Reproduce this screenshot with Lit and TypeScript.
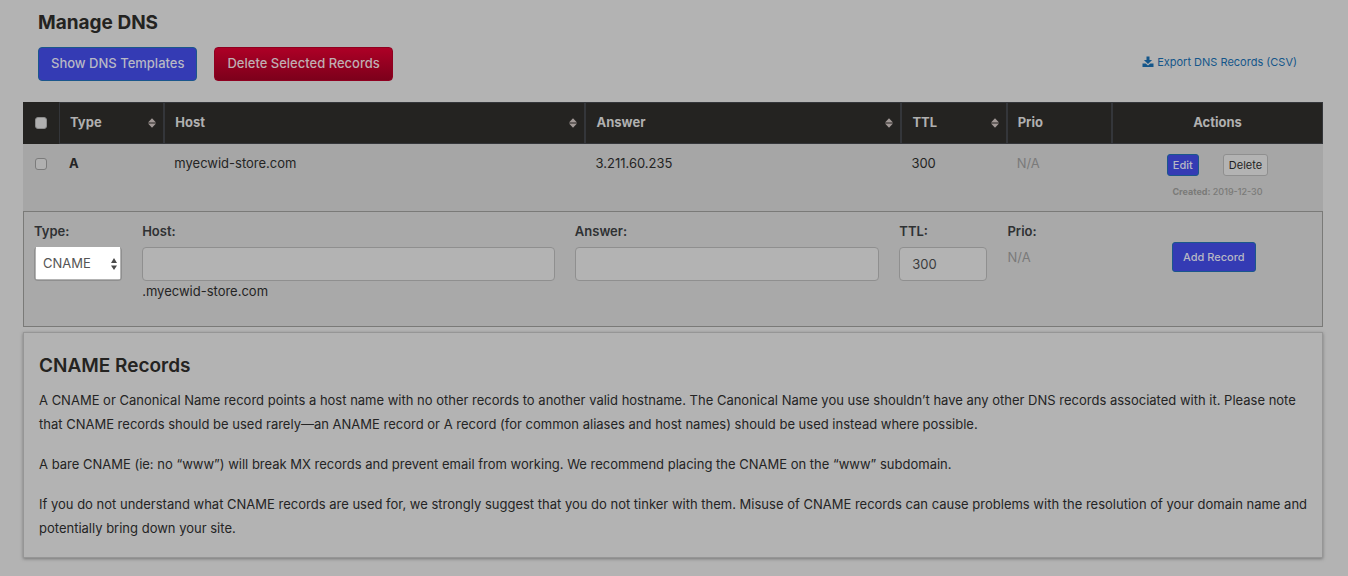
import { LitElement, html, css, svg } from "lit";
import { customElement, state } from "lit/decorators.js";

interface DnsRecord {
  type: string;
  host: string;
  answer: string;
  ttl: number;
  prio: string;
  created: string;
}

const sortIcon = html`<svg class="sort" viewBox="0 0 8 10" width="8" height="10" aria-hidden="true">
  ${svg`<path d="M4 0.3 L8 4.4 H0 Z M0 5.6 H8 L4 9.7 Z" fill="currentColor"/>`}
</svg>`;

@customElement("app-root")
export class AppRoot extends LitElement {
  static styles = css`
    :host {
      display: block;
      box-sizing: border-box;
      min-height: 100vh;
      padding: 11px 25px 18px 23px;
      background: #b3b3b3;
      color: #242424;
      font: 400 13px/20px Inter, "Open Sans", sans-serif;
    }
    *,
    *::before,
    *::after {
      box-sizing: border-box;
    }
    button,
    input,
    select {
      font: inherit;
      color: inherit;
      margin: 0;
    }
    .title {
      margin: 0 15px;
      font-size: 19px;
      line-height: 24px;
      font-weight: 700;
      color: #242321;
    }
    .toolbar {
      display: flex;
      align-items: flex-start;
      gap: 17px;
      margin: 12px 15px 21px;
    }
    .btn {
      height: 34px;
      padding: 0 12px 2px;
      border: 1px solid #1b578c;
      border-radius: 4px;
      background: #343bb4;
      color: #b8b8c4;
      font-size: 13px;
      font-weight: 500;
      white-space: nowrap;
    }
    .danger {
      border-color: #8f0020;
      background: linear-gradient(#ad0026, #7c001b);
      color: #bfaeb2;
    }
    .export {
      display: flex;
      align-items: center;
      gap: 3px;
      height: 30px;
      margin-left: auto;
      margin-right: 11px;
      color: #14568a;
      font-size: 11px;
      text-decoration: none;
    }
    .records {
      width: 100%;
      table-layout: fixed;
      border-collapse: separate;
      border-spacing: 0;
      background: #a6a6a6;
    }
    .c-check {
      width: 36px;
    }
    .c-1 {
      width: 8.1%;
    }
    .c-3 {
      width: 24.3%;
    }
    .c-4 {
      width: 32.4%;
    }
    th {
      height: 42px;
      padding: 0 7px 2px 10px;
      border: 1px solid #34363a;
      background: #242321;
      color: #b0b0b0;
      font-weight: 700;
      text-align: left;
    }
    th.check {
      border-color: #242321;
    }
    .check {
      padding: 0;
      text-align: center;
    }
    .actions {
      padding: 0 0 2px;
      text-align: center;
    }
    .head {
      display: flex;
      align-items: center;
      justify-content: space-between;
    }
    .sort {
      margin-top: 2px;
      color: #a19896;
    }
    .box {
      appearance: none;
      display: block;
      width: 12px;
      height: 12px;
      margin: 0 auto;
      border: 1px solid #7b7b7b;
      border-radius: 3px;
      background: #b0b0b0;
    }
    th .box {
      border-color: #8c8c8c;
    }
    td {
      height: 67px;
      padding: 9px 10px;
      vertical-align: top;
    }
    td.check {
      padding: 14px 0 0;
    }
    td.actions {
      padding: 10px 0 0;
    }
    .strong {
      font-weight: 700;
    }
    .muted {
      color: #7a7a7a;
    }
    .pair {
      display: flex;
      justify-content: center;
      gap: 24px;
    }
    .small {
      height: 22px;
      padding: 0 5px;
      border-radius: 3px;
      font-size: 11px;
    }
    .plain {
      border-color: #8f8f8f;
      background: #b3b3b3;
      color: #242424;
      font-weight: 400;
    }
    .created {
      margin-top: 9px;
      font-size: 9px;
      line-height: 14px;
      font-weight: 500;
      color: #7a7a78;
    }
    .editor {
      display: grid;
      grid-template-columns: repeat(12, minmax(0, 1fr));
      height: 116px;
      padding-top: 9px;
      border: 1px solid #7a7a78;
      background: #a9a9a9;
    }
    .field {
      padding: 0 10px;
    }
    .span-2 {
      grid-column: span 2;
      padding-top: 21px;
      text-align: center;
    }
    .span-3 {
      grid-column: span 3;
    }
    .span-4 {
      grid-column: span 4;
    }
    .label {
      display: block;
      margin-bottom: 6px;
      font-weight: 600;
      color: #2f3133;
    }
    .input {
      display: block;
      width: 100%;
      height: 34px;
      padding: 0 12px;
      border: 1px solid #8f8f8f;
      border-radius: 4px;
      background: #b3b3b3;
      color: #3a3c3e;
    }
    .select-wrap {
      position: relative;
      height: 34px;
      padding: 0 1px;
      border: solid #8f8f8f;
      border-width: 0 1px 1px;
      border-radius: 4px;
      background: #b3b3b3;
    }
    .select {
      appearance: none;
      display: block;
      width: 100%;
      height: 32px;
      padding: 0 7px;
      border: 0;
      border-radius: 0;
      background: #fff;
      color: #555;
    }
    .arrows {
      position: absolute;
      right: 4px;
      top: 11px;
      color: #4a4a4a;
      pointer-events: none;
    }
    .add {
      height: 30px;
      padding: 0 10px;
      border-radius: 3px;
      font-size: 11px;
    }
    .info {
      margin-top: 5px;
      padding: 21px 10px 17px 15px;
      border: 1px solid #969696;
      box-shadow: 0 1px 3px #777;
    }
    .info h2 {
      margin: 0 0 10px;
      font-size: 19px;
      line-height: 24px;
      font-weight: 600;
      color: #242321;
    }
    .info p {
      margin: 0 0 16px;
      line-height: 24px;
    }
    .info p:last-child {
      margin-bottom: 0;
    }
  `;

  @state() private records: DnsRecord[] = [
    { type: "A", host: "myecwid-store.com", answer: "3.211.60.235", ttl: 300, prio: "N/A", created: "2019-12-30" },
  ];

  private heading(label: string) {
    return html`<th scope="col"><div class="head"><span>${label}</span>${sortIcon}</div></th>`;
  }

  private row(r: DnsRecord) {
    return html`<tr>
      <td class="check"><input class="box" type="checkbox" aria-label="Select ${r.host}" /></td>
      <td class="strong">${r.type}</td>
      <td>${r.host}</td>
      <td>${r.answer}</td>
      <td>${r.ttl}</td>
      <td class="muted">${r.prio}</td>
      <td class="actions">
        <div class="pair">
          <button class="btn small">Edit</button>
          <button class="btn small plain">Delete</button>
        </div>
        <div class="created"><b>Created:</b> ${r.created}</div>
      </td>
    </tr>`;
  }

  render() {
    return html`
      <h1 class="title">Manage DNS</h1>
      <div class="toolbar">
        <button class="btn">Show DNS Templates</button>
        <button class="btn danger">Delete Selected Records</button>
        <a class="export" href="#">
          <svg viewBox="0 0 12 12" width="12" height="12" aria-hidden="true">
            <path
              d="M4.5 0.5h3v3.5h2.6L6 8 1.9 4h2.6z M0.5 7.6h3.2L6 9.6l2.3-2h3.2v3.4h-11z"
              fill="currentColor"
            />
          </svg>
          <span>Export DNS Records (CSV)</span>
        </a>
      </div>
      <table class="records">
        <colgroup>
          <col class="c-check" />
          <col class="c-1" />
          <col class="c-4" />
          <col class="c-3" />
          <col class="c-1" />
          <col class="c-1" />
          <col />
        </colgroup>
        <thead>
          <tr>
            <th class="check" scope="col"><input class="box" type="checkbox" aria-label="Select all" /></th>
            ${this.heading("Type")} ${this.heading("Host")} ${this.heading("Answer")} ${this.heading("TTL")}
            <th scope="col">Prio</th>
            <th class="actions" scope="col">Actions</th>
          </tr>
        </thead>
        <tbody>
          ${this.records.map((r) => this.row(r))}
        </tbody>
      </table>
      <form class="editor" @submit=${(e: Event) => e.preventDefault()}>
        <div class="field">
          <label class="label" for="type">Type:</label>
          <div class="select-wrap">
            <select class="select" id="type">
              <option>CNAME</option>
            </select>
            <svg class="arrows" viewBox="0 0 6 12" width="6" height="12" aria-hidden="true">
              <path d="M3 0 L6 5 H0 Z M0 7.5 H6 L3 12 Z" fill="currentColor" />
            </svg>
          </div>
        </div>
        <div class="field span-4">
          <label class="label" for="host">Host:</label>
          <input class="input" id="host" type="text" />
          <div>.myecwid-store.com</div>
        </div>
        <div class="field span-3">
          <label class="label" for="answer">Answer:</label>
          <input class="input" id="answer" type="text" />
        </div>
        <div class="field">
          <label class="label" for="ttl">TTL:</label>
          <input class="input" id="ttl" type="text" value="300" />
        </div>
        <div class="field">
          <span class="label">Prio:</span>
          <div class="muted">N/A</div>
        </div>
        <div class="span-2">
          <button class="btn add">Add Record</button>
        </div>
      </form>
      <section class="info">
        <h2>CNAME Records</h2>
        <p>
          A CNAME or Canonical Name record points a host name with no other records to another valid hostname. The
          Canonical Name you use shouldn’t have any other DNS records associated with it. Please note that CNAME records
          should be used rarely—an ANAME record or A record (for common aliases and host names) should be used instead
          where possible.
        </p>
        <p>
          A bare CNAME (ie: no “www”) will break MX records and prevent email from working. We recommend placing the
          CNAME on the “www” subdomain.
        </p>
        <p>
          If you do not understand what CNAME records are used for, we strongly suggest that you do not tinker with
          them. Misuse of CNAME records can cause problems with the resolution of your domain name and potentially bring
          down your site.
        </p>
      </section>
    `;
  }
}
